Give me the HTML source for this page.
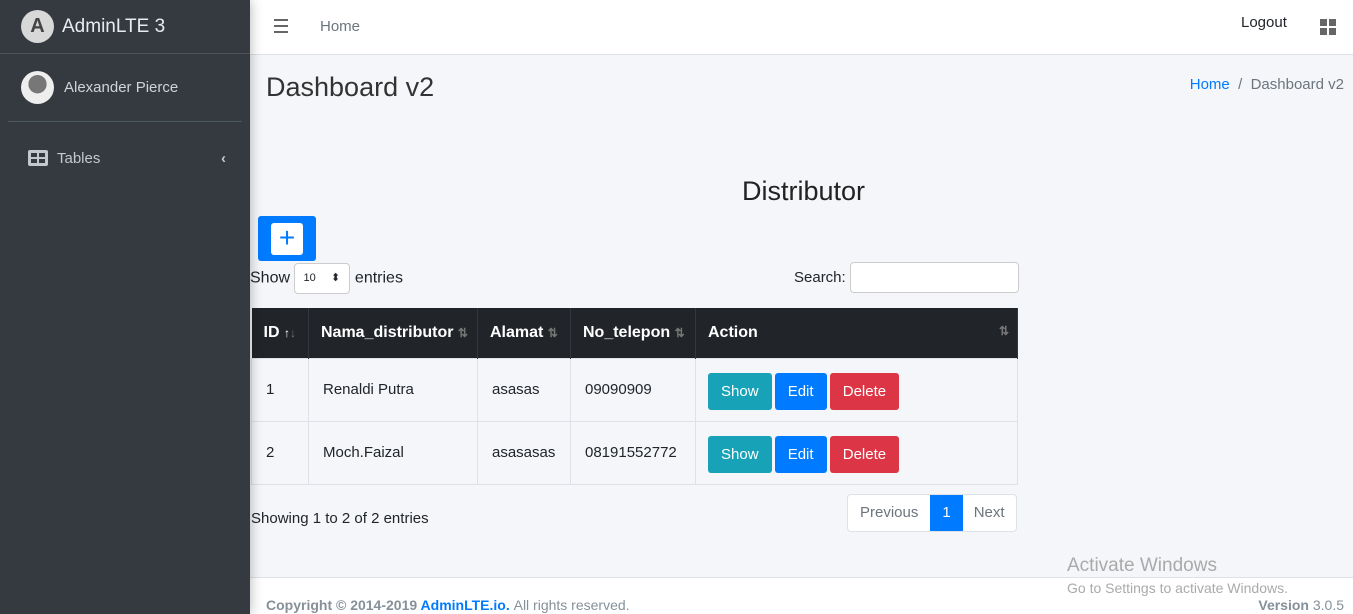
<!DOCTYPE html>
<html><head><style>
*{box-sizing:border-box;margin:0;padding:0}
body{width:1353px;height:614px;overflow:hidden;font-family:"Liberation Sans",sans-serif;background:#f4f6f9;position:relative;color:#212529;font-size:15px}
.sb{position:absolute;left:0;top:0;width:250px;height:614px;background:#343a40;box-shadow:0 0 12px rgba(0,0,0,.3);z-index:2}
.brand{height:54px;border-bottom:1px solid #4b545c;display:flex;align-items:center;padding-left:21px;color:#e9ecef;font-size:19px}
.logo{width:33px;height:33px;border-radius:50%;background:#d8d8d8;margin-right:8px;display:flex;align-items:center;justify-content:center;font-weight:bold;color:#444;font-size:20px}
.user{margin:0 8px;height:68px;border-bottom:1px solid #4f5962;display:flex;align-items:center;padding-left:13px;color:#d0d4d8;font-size:15px}
.av{width:33px;height:33px;border-radius:50%;background:radial-gradient(circle at 50% 40%,#777 0 35%,#eee 36%);margin-right:10px}
.nav{display:flex;align-items:center;height:40px;margin-top:16px;padding-left:28px;color:#c2c7d0;font-size:15px}
.top{position:absolute;left:250px;top:0;right:0;height:55px;background:#fff;border-bottom:1px solid #dee2e6}
.ft{position:absolute;left:250px;top:577px;right:0;height:37px;background:#fff;border-top:1px solid #dee2e6;font-size:14px;color:#869099}
table{border-collapse:collapse;position:absolute;left:251px;top:308px;width:767px;font-size:15px}
th{background:#212529;color:#fff;text-align:left;height:50px;padding-left:12px;font-family:"Liberation Sans Narrow","Liberation Sans",sans-serif;font-size:16px;border-right:1px solid #32383e}
td{height:63px;padding-left:14px;border:1px solid #dee2e6}
.b{display:inline-block;height:37px;line-height:37px;padding:0 13px;color:#fff;border-radius:3px;margin-right:-1px}
.ar{color:#777;font-size:12px}
</style></head><body>
<div class="sb">
<div class="brand"><div class="logo">A</div>AdminLTE 3</div>
<div class="user"><div class="av"></div>Alexander Pierce</div>
<div class="nav"><svg width="20" height="16"><rect x="0" y="0" width="20" height="16" rx="2" fill="#c2c7d0"/><rect x="3" y="3" width="6" height="4" fill="#343a40"/><rect x="11" y="3" width="6" height="4" fill="#343a40"/><rect x="3" y="9" width="6" height="4" fill="#343a40"/><rect x="11" y="9" width="6" height="4" fill="#343a40"/></svg><span style="margin-left:9px">Tables</span><span style="margin-left:auto;margin-right:24px;font-weight:bold">‹</span></div>
</div>
<div class="top">
<div style="position:absolute;left:24px;top:19px;width:14px"><div style="height:2px;background:#666;margin-bottom:4px"></div><div style="height:2px;background:#666;margin-bottom:4px"></div><div style="height:2px;background:#666"></div></div>
<div style="position:absolute;left:70px;top:18px;color:#6c757d">Home</div>
<div style="position:absolute;left:991px;top:14px;color:#212529">Logout</div>
<svg style="position:absolute;left:1070px;top:19px" width="16" height="16"><rect x="0" y="0" width="7" height="7" fill="#666"/><rect x="9" y="0" width="7" height="7" fill="#666"/><rect x="0" y="9" width="7" height="7" fill="#666"/><rect x="9" y="9" width="7" height="7" fill="#666"/></svg>
</div>
<div style="position:absolute;left:266px;top:72px;font-size:27px;color:#333">Dashboard v2</div>
<div style="position:absolute;right:9px;top:76px;font-size:15px;color:#6c757d"><span style="color:#007bff">Home</span> &nbsp;/&nbsp; Dashboard v2</div>
<div style="position:absolute;left:742px;top:176px;font-size:27px;color:#222">Distributor</div>
<div style="position:absolute;left:258px;top:216px;width:58px;height:45px;background:#007bff;border-radius:3px"><div style="position:absolute;left:13px;top:7px;width:32px;height:32px;background:#fff;border-radius:3px;color:#007bff;font-size:28px;text-align:center;line-height:30px">+</div></div>
<div style="position:absolute;left:250px;top:263px;font-family:'Liberation Sans Narrow',sans-serif;font-size:16px">Show <span style="display:inline-block;width:56px;height:31px;border:1px solid #ccc;border-radius:4px;background:#fff;font-size:11px;vertical-align:middle;line-height:29px;padding-left:8px">10 &nbsp; &nbsp; ⬍</span> entries</div>
<div style="position:absolute;left:794px;top:269px;font-size:15px">Search:</div>
<div style="position:absolute;left:850px;top:262px;width:169px;height:31px;border:1px solid #ccc;border-radius:4px;background:#fff"></div>
<table>
<tr><th style="width:57px">ID <span style="font-size:12px">↑</span><span class="ar">↓</span></th><th style="width:169px">Nama_distributor <span class="ar">⇅</span></th><th style="width:93px">Alamat <span class="ar">⇅</span></th><th style="width:125px">No_telepon <span class="ar">⇅</span></th><th>Action <span class="ar" style="float:right;margin-right:8px">⇅</span></th></tr>
<tr><td>1</td><td>Renaldi Putra</td><td>asasas</td><td>09090909</td><td style="padding-left:12px;padding-top:4px"><span class="b" style="background:#17a2b8">Show</span> <span class="b" style="background:#007bff">Edit</span> <span class="b" style="background:#dc3545">Delete</span></td></tr>
<tr><td>2</td><td>Moch.Faizal</td><td>asasasas</td><td>08191552772</td><td style="padding-left:12px;padding-top:4px"><span class="b" style="background:#17a2b8">Show</span> <span class="b" style="background:#007bff">Edit</span> <span class="b" style="background:#dc3545">Delete</span></td></tr>
</table>
<div style="position:absolute;left:251px;top:510px">Showing 1 to 2 of 2 entries</div>
<div style="position:absolute;left:847px;top:494px;height:38px;display:flex;border:1px solid #dee2e6;border-radius:4px;background:#fff;color:#6c757d;line-height:36px">
<span style="padding:0 12px">Previous</span><span style="background:#007bff;color:#fff;padding:0 12px">1</span><span style="padding:0 11px">Next</span></div>
<div class="ft"><div style="position:absolute;left:16px;top:19px;font-weight:bold;color:#869099">Copyright © 2014-2019 <span style="color:#007bff">AdminLTE.io.</span> <span style="font-weight:normal">All rights reserved.</span></div><div style="position:absolute;right:9px;top:19px"><b>Version</b> 3.0.5</div></div>
<div style="position:absolute;left:1067px;top:555px;font-size:19px;color:#aaa;z-index:5">Activate Windows</div>
<div style="position:absolute;left:1067px;top:580px;font-size:14px;color:#aaa;z-index:5">Go to Settings to activate Windows.</div>
</body></html>
